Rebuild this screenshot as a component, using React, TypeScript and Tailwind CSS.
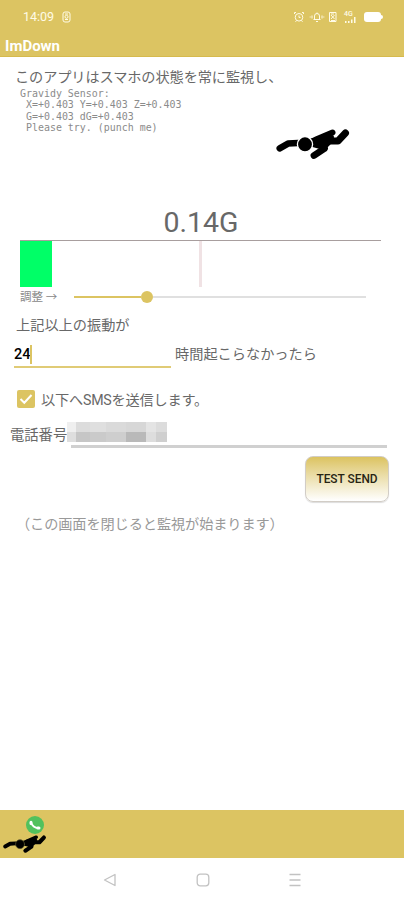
import React from "react";

const JP = "font-['Roboto','Noto_Sans_CJK_JP',sans-serif]";

function FallenMan({ className, halo }: { className: string; halo: string }) {
  return (
    <svg viewBox="0 0 74 34" className={className} fill="none" stroke="#000" strokeLinecap="round" strokeLinejoin="round">
      <path d="M3.700 21.300 L12 16.600 L22 16" strokeWidth="6.500" />
      <path d="M35 13.500 L47 10 L56 10 L53 16 L48 21 L37 18 Z" fill="#000" strokeWidth="4" />
      <path d="M40 12.500 L56.500 5.500" strokeWidth="6" />
      <path d="M48 14 L62 14 L69.500 6" strokeWidth="7" />
      <path d="M44 17 L48.500 21.500 L38 28.500" strokeWidth="6.800" />
      <circle cx="29" cy="17.300" r="7.600" fill="#000" stroke={halo} strokeWidth="1.300" />
    </svg>
  );
}

function StatusIcons() {
  return (
    <div className="flex items-center text-[#fffbe6]">
      <svg className="h-3 w-3" viewBox="0 0 12 12" fill="none" stroke="currentColor">
        <circle cx="6" cy="6.3" r="3.8" />
        <path d="M1.5 3V1.5H3M9 1.5h1.5V3M6 4.5v2h1.5M3.5 9.5l-1 1.3M8.5 9.5l1 1.3" />
      </svg>
      <svg className="ml-1 h-3 w-4" viewBox="0 0 16 12" fill="none" stroke="currentColor">
        <path d="M5.5 8.5V5a2.5 2.5 0 0 1 5 0v3.500M4.500 8.500h7M8 1.500v1M7 10.500h2M3 4.500v3M13 4.500v3M1.200 5.500v1M14.800 5.500v1" />
      </svg>
      <svg className="ml-1 h-3 w-2" viewBox="0 0 8 12" fill="none" stroke="currentColor">
        <path d="M.5 1.500h6.500v9H.5zM2 4l3.500 4M5.500 4L2 8M2 3h3M2 9.500h4" />
      </svg>
      <div className="ml-[7px] flex h-3 w-3 flex-col">
        <span className="h-[6px] font-['Roboto',sans-serif] text-[7px] font-medium leading-[6px]">4G</span>
        <svg className="h-[6px] w-3" viewBox="0 0 12 6" fill="currentColor">
          <path d="M1 4h1.500v2H1zM4 4h1.500v2H4zM7 2.500h1.500V6H7zM10 0h1.500v6H10z" />
        </svg>
      </div>
      <div className="ml-2 h-[10px] w-[17px] rounded-[3px] bg-white" />
      <div className="h-1 w-[2px] rounded-r bg-white" />
    </div>
  );
}

const MOSAIC = [
  ["w-[9px] bg-[#efefef]", "w-[9px] bg-[#dedede]"],
  ["w-[14px] bg-[#dcdcdc]", "w-[14px] bg-[#c6c6c6]"],
  ["w-[16px] bg-[#dfdfdf]", "w-[16px] bg-[#cacaca]"],
  ["w-[20px] bg-[#dadada]", "w-[20px] bg-[#cecece]"],
  ["w-[20px] bg-[#d7d7d7]", "w-[20px] bg-[#b9b9b9]"],
  ["w-[10px] bg-[#e4e4e4]", "w-[10px] bg-[#dddddd]"],
  ["w-[11px] bg-[#dcdcdc]", "w-[11px] bg-[#cfcfcf]"],
];

export default function App() {
  return (
    <div className={`flex h-[900px] w-[404px] flex-col overflow-hidden bg-white text-[#686868] ${JP}`}>
      <header className="flex h-[57px] shrink-0 flex-col border-b border-[#d6ba4d] bg-[#dcc462]">
        <div className="flex h-[37px] items-center justify-between pl-[23px] pr-[21px]">
          <div className="flex items-center text-[#fffbe6]">
            <span className="w-[31px] text-[12.5px] leading-4">14:09</span>
            <svg className="ml-2 h-3 w-[9px]" viewBox="0 0 9 12" fill="none" stroke="currentColor">
              <rect x="1" y="1" width="7" height="10" rx="2" />
              <path d="M3 3h3M3 8.500h3" />
              <circle cx="4.500" cy="5.800" r="1.500" />
            </svg>
          </div>
          <StatusIcons />
        </div>
        <h1 className="mt-[2px] pl-[5px] text-[15px] font-bold leading-5 text-white">ImDown</h1>
      </header>

      <main className="flex h-[753px] shrink-0 flex-col">
        <p className="mt-[10px] whitespace-nowrap pl-[15px] text-[14.2px] leading-5 tracking-[-0.1px]">このアプリはスマホの状態を常に監視し、</p>
        <div className="flex h-[119px]">
          <pre className="mt-px w-[276px] pl-5 font-['DejaVu_Sans_Mono',monospace] text-[9.95px] leading-[11.300px] text-[#8b8b8b]">{`Gravidy Sensor:
 X=+0.403 Y=+0.403 Z=+0.403
 G=+0.403 dG=+0.403
 Please try. (punch me)`}</pre>
          <FallenMan className="mt-[40px] h-[34px] w-[74px]" halo="#fff" />
        </div>
        <div className="h-[33px] pr-[2px] text-center text-[28.5px] leading-[33px]">0.14G</div>
        <div className="ml-5 mt-px flex h-[47px] w-[361px] border-t border-[#a89e9e]">
          <div className="h-full w-8 bg-[#00ff67]" />
          <div className="ml-[147px] h-full w-[3px] bg-[#f0e2e4]" />
        </div>
        <div className="flex h-[19px] items-center pl-5">
          <span className="w-[54px] whitespace-nowrap text-[11.500px] leading-4 text-[#888]">調整 →</span>
          <div className="h-[2px] w-[67px] bg-[#dcc462]" />
          <div className="h-3 w-3 rounded-full bg-[#dcc462]" />
          <div className="h-[2px] w-[213px] bg-[#e0e0e0]" />
        </div>
        <p className="mt-[9px] whitespace-nowrap pl-4 text-[14.2px] leading-5">上記以上の振動が</p>
        <div className="mt-[7px] flex h-[26px]">
          <div className="ml-[14px] flex w-[157px] items-center border-b-2 border-[#e0cb76]">
            <span className="mt-[2px] text-[14.5px] font-medium leading-5 text-black">24</span>
            <span className="h-[19px] w-[1.500px] bg-[#dcc462]" />
          </div>
          <span className="ml-[4px] mt-[2px] whitespace-nowrap text-[14.2px] leading-5">時間起こらなかったら</span>
        </div>
        <div className="mt-[21px] flex h-5 items-center pl-[17px]">
          <div className="flex h-[18px] w-[18px] items-center justify-center rounded-[2px] bg-[#dcc462]">
            <svg className="h-3 w-[14px]" viewBox="0 0 14 12" fill="none" stroke="white" strokeWidth="2">
              <path d="M1.500 6l3.800 3.800L12.500 2" />
            </svg>
          </div>
          <span className="ml-[6px] mt-px whitespace-nowrap text-[14.2px] leading-5 tracking-[-0.2px]">以下へSMSを送信します。</span>
        </div>
        <div className="mt-[13px] flex h-[26px] pl-[10px]">
          <span className="mt-[3px] w-[57px] whitespace-nowrap text-[14.3px] leading-5">電話番号</span>
          <div className="flex w-[320px] flex-col">
            <div className="flex h-5">
              {MOSAIC.map(([top, bottom], i) => (
                <div key={i} className="flex flex-col">
                  <div className={`h-[10px] ${top}`} />
                  <div className={`h-[10px] ${bottom}`} />
                </div>
              ))}
            </div>
            <div className="ml-1 mt-[3px] h-[3px] bg-[#d0d0d0]" />
          </div>
        </div>
        <button className="ml-[305px] mt-2 h-[46px] w-[84px] shrink-0 whitespace-nowrap rounded-[8px] border border-[#d2cdc6] bg-linear-to-b from-[#dcc35f] to-white pt-[2px] text-[11.900px] font-medium text-[#272414] shadow-[0_1px_1px_#ddd]">
          TEST SEND
        </button>
        <p className="mt-[12px] whitespace-nowrap pl-[16px] text-[14.2px] leading-5 tracking-[-0.1px] text-[#999]">（この画面を閉じると監視が始まります）</p>
      </main>

      <footer className="flex h-[48px] shrink-0 flex-col bg-[#dcc462]">
        <div className="ml-[26px] mt-[6px] flex h-[18px] w-[18px] shrink-0 items-center justify-center rounded-full bg-[#52c15d]">
          <svg className="h-3 w-3" viewBox="0 0 12 12" fill="none" stroke="white" strokeLinecap="round">
            <path d="M2 3.500C3 6.500 5.500 8.800 9.500 9" strokeWidth="2" />
            <path d="M2 3.300v1.200M8.800 9h1.200" strokeWidth="3" />
          </svg>
        </div>
        <FallenMan className="ml-[3px] h-[20px] w-[43.500px]" halo="#55502c" />
      </footer>
      <nav className="flex h-[42px] shrink-0 items-center justify-between pl-[103px] pr-[102px] pt-[2px] text-[#c2c2c2]">
        <svg className="h-[14px] w-[14px]" viewBox="0 0 14 14" fill="none" stroke="currentColor" strokeWidth="1.300" strokeLinejoin="round">
          <path d="M1.500 7L12 1.500v11z" />
        </svg>
        <svg className="h-[14px] w-[14px]" viewBox="0 0 14 14" fill="none" stroke="currentColor" strokeWidth="1.300">
          <rect x="1.200" y="1.200" width="11.600" height="11.600" rx="3" />
        </svg>
        <svg className="h-[14px] w-[14px]" viewBox="0 0 14 14" fill="none" stroke="currentColor" strokeWidth="1.500">
          <path d="M1.500 1.500h11M1.500 7h11M1.500 12.500h11" />
        </svg>
      </nav>
    </div>
  );
}
